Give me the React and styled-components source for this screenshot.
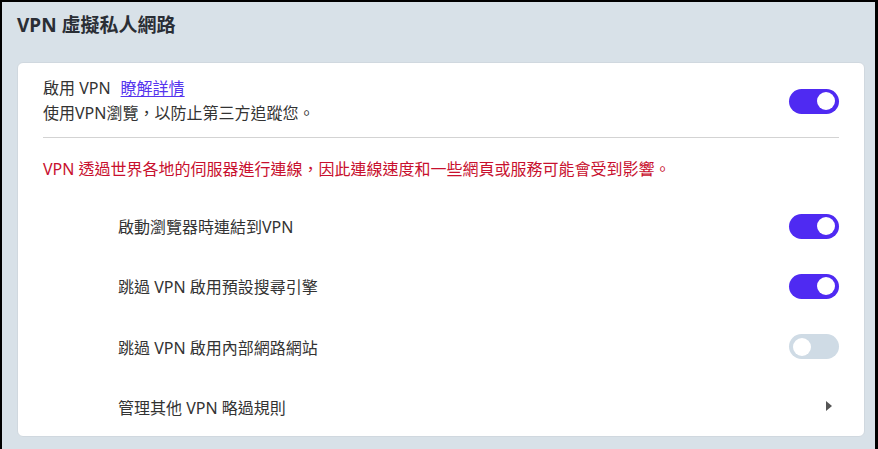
import React, { useState } from "react"
import styled, { createGlobalStyle } from "styled-components"

const GlobalStyle = createGlobalStyle`
  html, body {
    margin: 0;
    padding: 0;
    background: #000;
  }
  * {
    box-sizing: border-box;
  }
`

const rules = [
  { label: "啟動瀏覽器時連結到VPN", on: true },
  { label: "跳過 VPN 啟用預設搜尋引擎", on: true },
  { label: "跳過 VPN 啟用內部網路網站", on: false },
]

export default function App() {
  const [enabled, setEnabled] = useState(true)
  const [items, setItems] = useState(rules)

  const flip = (i) =>
    setItems(items.map((it, n) => (n === i ? { ...it, on: !it.on } : it)))

  return (
    <Page>
      <GlobalStyle />
      <Title>VPN 虛擬私人網路</Title>
      <Card>
        <Header>
          <div>
            <Label>
              啟用 VPN<Link href="#">瞭解詳情</Link>
            </Label>
            <Sub>使用VPN瀏覽，以防止第三方追蹤您。</Sub>
          </div>
          <Toggle $on={enabled} onClick={() => setEnabled(!enabled)} />
        </Header>
        <Warning>
          VPN 透過世界各地的伺服器進行連線，因此連線速度和一些網頁或服務可能會受到影響。
        </Warning>
        <List>
          {items.map((it, i) => (
            <Row key={it.label}>
              <RowText>{it.label}</RowText>
              <Toggle $on={it.on} onClick={() => flip(i)} />
            </Row>
          ))}
          <Row>
            <RowText>管理其他 VPN 略過規則</RowText>
            <Arrow />
          </Row>
        </List>
      </Card>
    </Page>
  )
}

const Page = styled.div`
  height: 449px;
  background: #d8e1e8;
  border-top: 2px solid #000;
  border-left: 2px solid #000;
  border-right: 3px solid #000;
  padding: 0 10px 0 15px;
  font-family: "Noto Sans", "Noto Sans CJK TC", sans-serif;
  color: #333;
  overflow: hidden;
`
const Title = styled.h1`
  margin: 0;
  height: 60px;
  padding-top: 9px;
  font-size: 19px;
  line-height: 28px;
  font-weight: 700;
  color: #2a2e35;
`
const Card = styled.section`
  background: #fff;
  border: 1px solid #d0d8df;
  border-radius: 6px;
  padding: 13px 25px 0;
  height: 375px;
`
const Header = styled.div`
  display: flex;
  justify-content: space-between;
  align-items: center;
  padding-bottom: 11px;
  border-bottom: 1px solid #d3d3d3;
`
const Label = styled.div`
  font-size: 16px;
  line-height: 25px;
`
const Link = styled.a`
  margin-left: 10px;
  color: #5535ee;
  text-decoration: underline;
  text-underline-offset: 2px;
`
const Sub = styled.div`
  font-size: 16px;
  line-height: 25px;
`
const Warning = styled.p`
  margin: 0;
  padding-top: 19px;
  font-size: 16px;
  line-height: 25px;
  color: #c8102e;
`
const List = styled.div`
  padding: 14px 0 0 75px;
`
const Row = styled.div`
  display: flex;
  justify-content: space-between;
  align-items: center;
  height: 60.3px;
`
const RowText = styled.span`
  font-size: 16px;
`
const Toggle = styled.button`
  position: relative;
  width: 50px;
  height: 25px;
  border: none;
  border-radius: 13px;
  padding: 0;
  cursor: pointer;
  background: ${(p) => (p.$on ? "#4f2af2" : "#cfdbe5")};
  &::after {
    content: "";
    position: absolute;
    top: 3.5px;
    left: ${(p) => (p.$on ? "28px" : "4px")};
    width: 18px;
    height: 18px;
    border-radius: 50%;
    background: #fff;
  }
`
const Arrow = styled.span`
  width: 0;
  height: 0;
  margin-right: 7px;
  margin-top: -2px;
  border-top: 5px solid transparent;
  border-bottom: 5px solid transparent;
  border-left: 6px solid #555;
`
